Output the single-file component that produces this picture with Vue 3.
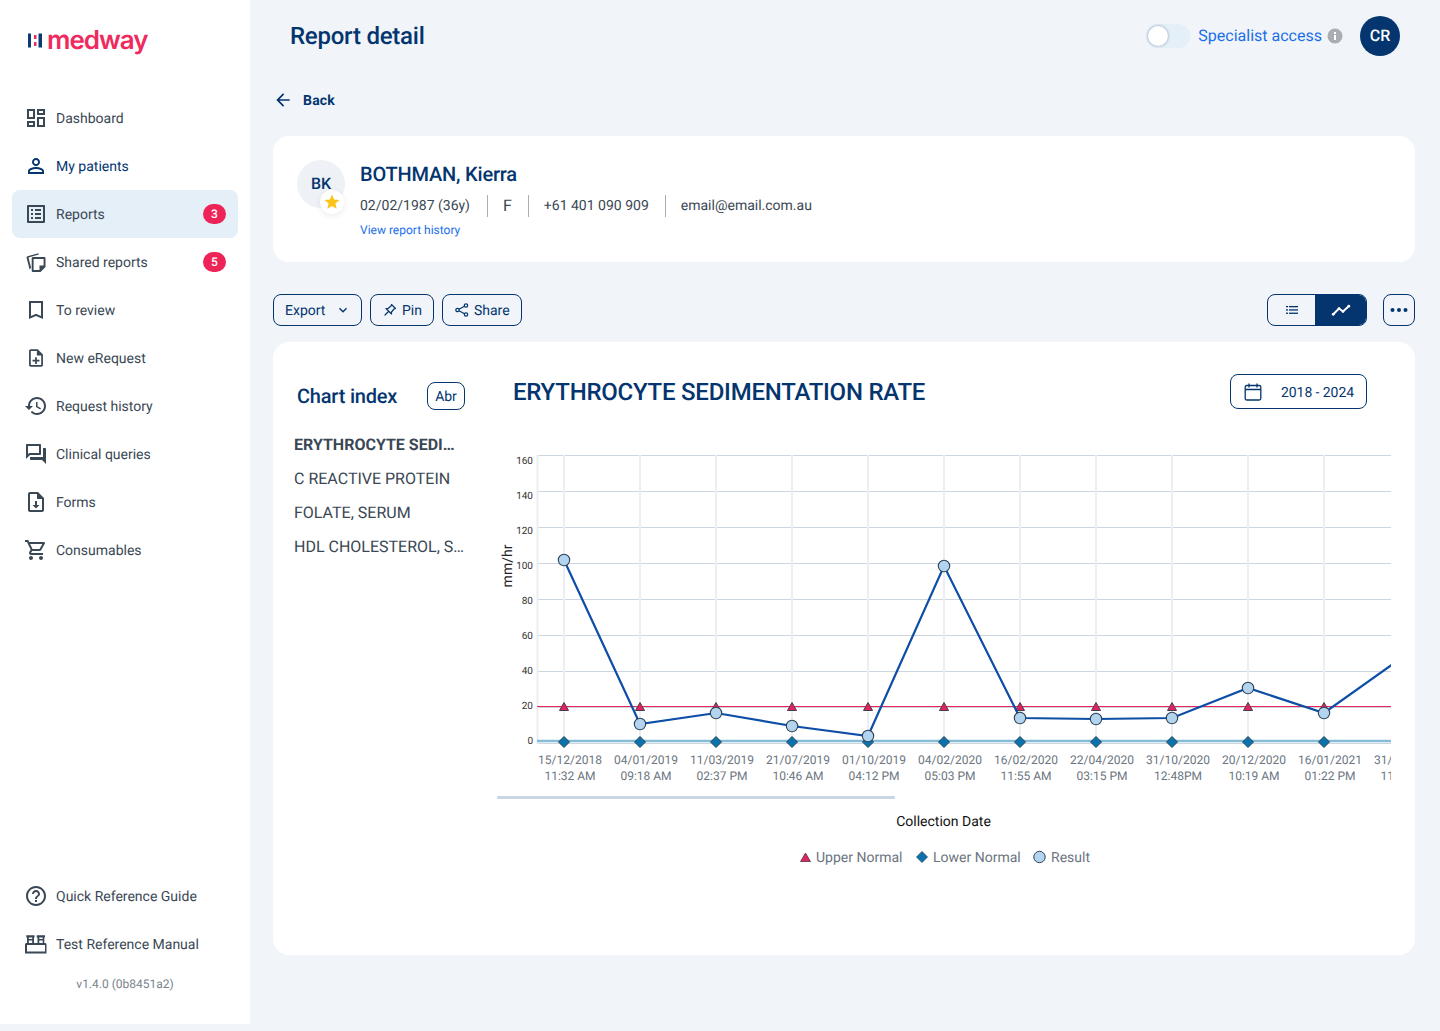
<script setup>
const navTop = [
  { label: 'Dashboard', d: 'M19 5v2h-4V5h4M9 5v6H5V5h4m10 8v6h-4v-6h4M9 17v2H5v-2h4M21 3h-8v6h8V3zM11 3H3v10h8V3zm10 8h-8v10h8V11zm-10 4H3v6h8v-6z' },
  { label: 'My patients', cls: 'navy', d: 'M12 5.9c1.16 0 2.1.94 2.1 2.1s-.94 2.1-2.1 2.1S9.9 9.16 9.9 8s.94-2.1 2.1-2.1m0 9c2.97 0 6.1 1.46 6.1 2.1v1.1H5.9V17c0-.64 3.13-2.1 6.1-2.1M12 4C9.79 4 8 5.79 8 8s1.79 4 4 4 4-1.79 4-4-1.79-4-4-4zm0 9c-2.67 0-8 1.34-8 4v3h16v-3c0-2.66-5.33-4-8-4z' },
  { label: 'Reports', cls: 'active', badge: 3, d: 'M19 5v14H5V5h14m1.1-2H3.9c-.5 0-.9.4-.9.9v16.2c0 .4.4.9.9.9h16.2c.4 0 .9-.5.9-.9V3.9c0-.5-.5-.9-.9-.9zM11 7h6v2h-6V7zm0 4h6v2h-6v-2zm0 4h6v2h-6zM7 7h2v2H7zm0 4h2v2H7zm0 4h2v2H7z' },
  { label: 'Shared reports', badge: 5, d: 'M9 7h11.2c.7 0 1.3.6 1.3 1.3V17l-5 5H9c-.7 0-1.3-.6-1.3-1.3V8.3C7.7 7.6 8.3 7 9 7zm.6 1.9v11.2h5.9v-4.6h4.1V8.900zM5.600 19.600l-3-11.800c-.2-.7.2-1.300.9-1.500l10.900-3.100.4 1.300-10.300 2.900 2.600 10.300z' },
  { label: 'To review', d: 'M19 3H5v18l7-3 7 3V3zm-2 15l-5-2.180L7 18V5h10v13z' },
  { label: 'New eRequest', icon: 'small', d: 'M13 11h-2v3H8v2h3v3h2v-3h3v-2h-3zm1-9H6c-1.100 0-2 .9-2 2v16c0 1.100.89 2 1.990 2H18c1.100 0 2-.9 2-2V8l-6-6zm4 18H6V4h7v5h5v11z' },
  { label: 'Request history', d: 'M13 3c-4.970 0-9 4.030-9 9H1l3.890 3.890.07.14L9 12H6c0-3.870 3.130-7 7-7s7 3.130 7 7-3.130 7-7 7c-1.930 0-3.680-.79-4.940-2.060l-1.420 1.420C8.270 19.990 10.510 21 13 21c4.970 0 9-4.030 9-9s-4.030-9-9-9zm-1 5v5l4.280 2.540.72-1.210-3.500-2.080V8H12z' },
  { label: 'Clinical queries', d: 'M15 4v7H5.170L4 12.170V4h11m1-2H3c-.55 0-1 .45-1 1v14l4-4h10c.55 0 1-.45 1-1V3c0-.55-.45-1-1-1zm5 4h-2v9H6v2c0 .55.45 1 1 1h11l4 4V7c0-.55-.45-1-1-1z' },
  { label: 'Forms', d: 'M14 2H6c-1.100 0-2 .9-2 2v16c0 1.100.89 2 1.990 2H18c1.100 0 2-.9 2-2V8l-6-6zm4 18H6V4h7v5h5v11zM13 11h-2v4H8.500l3.500 3.500 3.500-3.500H13z' },
  { label: 'Consumables', d: 'M15.550 13c.75 0 1.410-.41 1.750-1.030l3.580-6.490c.37-.66-.11-1.480-.87-1.480H5.210l-.94-2H1v2h2l3.600 7.590-1.350 2.440C4.520 15.370 5.480 17 7 17h12v-2H7l1.100-2h7.450zM6.160 6h12.150l-2.760 5H8.530L6.160 6zM7 18c-1.100 0-1.990.9-1.990 2S5.900 22 7 22s2-.9 2-2-.9-2-2-2zm10 0c-1.100 0-1.990.9-1.990 2s.89 2 1.990 2 2-.9 2-2-.9-2-2-2z' },
]
const navBottom = [
  { label: 'Quick Reference Guide', d: 'M11 18h2v-2h-2v2zm1-16C6.480 2 2 6.480 2 12s4.480 10 10 10 10-4.480 10-10S17.520 2 12 2zm0 18c-4.410 0-8-3.590-8-8s3.590-8 8-8 8 3.590 8 8-3.590 8-8 8zm0-14c-2.210 0-4 1.790-4 4h2c0-1.100.9-2 2-2s2 .9 2 2c0 2-3 1.750-3 5h2c0-2.250 3-2.500 3-5 0-2.210-1.790-4-4-4z' },
  { label: 'Test Reference Manual', d: 'M1 12.500c0-.8.7-1.500 1.500-1.500H3V5.500H2.300V3.200h8.200v2.300H10V11h3.500V5.500h-.8V3.200h8.300v2.300h-.7V11h.7c.8 0 1.500.7 1.500 1.500V21.500H1zM4.800 5.500V7h3.400V5.500zm0 3V11h3.400V8.500zm10.500-3V7h3.400V5.500zm0 3V11h3.400V8.500zM3 13v6.500h18V13z' },
]

const index = ['ERYTHROCYTE SEDIMENTATION RATE', 'C REACTIVE PROTEIN', 'FOLATE, SERUM', 'HDL CHOLESTEROL, SERUM']

const originY = 445
const xs = Array.from({ length: 12 }, (_, i) => 67 + 76 * i)
const yLabels = [160, 140, 120, 100, 80, 60, 40, 20, 0]
const yAxis = yLabels.map((label, i) => ({
  label,
  grid: 455.5 + 36 * i - originY,
  text: 464 + 35 * i - originY,
}))
const dates = [
  ['15/12/2018', '11:32 AM'], ['04/01/2019', '09:18 AM'], ['11/03/2019', '02:37 PM'], ['21/07/2019', '10:46 AM'],
  ['01/10/2019', '04:12 PM'], ['04/02/2020', '05:03 PM'], ['16/02/2020', '11:55 AM'], ['22/04/2020', '03:15 PM'],
  ['31/10/2020', '12:48PM'], ['20/12/2020', '10:19 AM'], ['16/01/2021', '01:22 PM'], ['31/03/2021', '11:05 AM'],
]
const resultY = [560, 724, 713, 726, 736, 566, 718, 719, 718, 688, 713, 659].map((y) => y - originY)
const points = xs.map((x, i) => ({ x, y: resultY[i] }))
const linePoints = points.map((p) => `${p.x},${p.y}`).join(' ')
const upperY = 261.500
const lowerY = 296
const tri = (x, y) => `${x},${y - 4} ${x + 4.500},${y + 4} ${x - 4.500},${y + 4}`
const dia = (x, y) => `${x},${y - 5.500} ${x + 5.500},${y} ${x},${y + 5.500} ${x - 5.500},${y}`
</script>

<template>
  <div class="page">
    <aside class="side">
      <div>
        <div class="logo">
          <svg width="15" height="15" viewBox="0 0 15 15" class="logo-mark">
            <rect x="0" y="0.500" width="3" height="14" fill="#0c3a73" />
            <rect x="6" y="2" width="2.500" height="4" fill="#ee2a5f" />
            <rect x="6" y="9" width="2.500" height="4" fill="#ee2a5f" />
            <rect x="10.500" y="0.500" width="3.500" height="14" fill="#0c3a73" />
          </svg>
          <span class="logo-text">medway</span>
        </div>
        <nav class="nav">
          <a v-for="item in navTop" :key="item.label" class="nav-item" :class="item.cls">
            <svg class="nav-icon" :class="item.icon" viewBox="0 0 24 24"><path :d="item.d" /></svg>
            <span class="nav-label">{{ item.label }}</span>
            <span v-if="item.badge" class="badge">{{ item.badge }}</span>
          </a>
        </nav>
      </div>
      <div class="side-foot">
        <a v-for="item in navBottom" :key="item.label" class="nav-item">
          <svg class="nav-icon" viewBox="0 0 24 24"><path :d="item.d" fill-rule="evenodd" /></svg>
          <span class="nav-label">{{ item.label }}</span>
        </a>
        <div class="version">v1.4.0 (0b8451a2)</div>
      </div>
    </aside>

    <main class="main">
      <header class="top">
        <h1 class="title">Report detail</h1>
        <div class="top-right">
          <span class="toggle"><span class="thumb"></span></span>
          <span class="spec">Specialist access</span>
          <svg class="info" width="16" height="16" viewBox="0 0 16 16">
            <circle cx="8" cy="8" r="7.500" fill="#a8aeb4" />
            <rect x="7" y="7" width="2" height="5" fill="#fff" />
            <rect x="7" y="4" width="2" height="2" fill="#fff" />
          </svg>
          <span class="me">CR</span>
        </div>
      </header>

      <div class="back">
        <svg width="20" height="20" viewBox="0 0 24 24"><path d="M20 11H7.830l5.590-5.590L12 4l-8 8 8 8 1.410-1.410L7.830 13H20v-2z" fill="#04356f" /></svg>
        <span class="back-text">Back</span>
      </div>

      <section class="card patient">
        <div class="avatar">
          BK
          <span class="star">
            <svg width="18" height="18" viewBox="0 0 24 24"><path d="M12 17.270 18.180 21l-1.640-7.030L22 9.240l-7.190-.61L12 2 9.190 8.630 2 9.240l5.460 4.730L5.820 21z" fill="#fcc419" /></svg>
          </span>
        </div>
        <div class="pinfo">
          <div class="pname">BOTHMAN, Kierra</div>
          <div class="pmeta">
            <span class="dob">02/02/1987 (36y)</span>
            <span class="sex">F</span>
            <span class="phone">+61 401 090 909</span>
            <span class="mail">email@email.com.au</span>
          </div>
          <a class="plink">View report history</a>
        </div>
      </section>

      <div class="toolbar">
        <div class="tools">
          <button class="btn export">
            <span class="bt">Export</span>
            <svg width="16" height="16" viewBox="0 0 24 24"><path d="M7.410 8.590 12 13.170l4.590-4.580L18 10l-6 6-6-6z" fill="#04356f" /></svg>
          </button>
          <button class="btn">
            <svg width="16" height="16" viewBox="0 0 16 16" fill="none" stroke="#04356f" stroke-width="1.200" stroke-linejoin="round" stroke-linecap="round"><path d="M9.500 2.500 13.500 6.500 12 7 9.500 10 9.500 12 4 6.500 6 6.500 9 4zM6.500 9.500 3 13" /></svg>
            <span class="bt">Pin</span>
          </button>
          <button class="btn">
            <svg width="16" height="16" viewBox="0 0 16 16" fill="none" stroke="#04356f" stroke-width="1.200"><circle cx="12" cy="3.500" r="1.700" /><circle cx="3.500" cy="8" r="1.700" /><circle cx="12" cy="12.500" r="1.700" /><path d="M5 7.200 10.500 4.300M5 8.800l5.500 2.900" /></svg>
            <span class="bt">Share</span>
          </button>
        </div>
        <div class="tools views">
          <div class="seg">
            <span class="seg-item">
              <svg width="14" height="10" viewBox="0 0 14 10" fill="#04356f"><rect x="1" y="1" width="2" height="1.300" /><rect x="4" y="1" width="9" height="1.300" /><rect x="1" y="4.300" width="2" height="1.300" /><rect x="4" y="4.300" width="9" height="1.300" /><rect x="1" y="7.600" width="2" height="1.300" /><rect x="4" y="7.600" width="9" height="1.300" /></svg>
            </span>
            <span class="seg-item on">
              <svg width="20" height="20" viewBox="0 0 20 20" fill="#fff" stroke="none"><path d="M2 14.500 8 8.500 12 11.500 18 6" fill="none" stroke="#fff" stroke-width="2" /><circle cx="2.200" cy="14.300" r="1.400" /><circle cx="8" cy="8.500" r="1.300" /><circle cx="12" cy="11.500" r="1.300" /><circle cx="17.800" cy="6.200" r="1.400" /></svg>
            </span>
          </div>
          <button class="btn more">
            <svg width="18" height="6" viewBox="0 0 18 6" fill="#04356f"><circle cx="2.500" cy="3" r="2" /><circle cx="9" cy="3" r="2" /><circle cx="15.500" cy="3" r="2" /></svg>
          </button>
        </div>
      </div>

      <section class="card chart-card">
        <div class="index">
          <div class="index-head">
            <h2>Chart index</h2>
            <button class="btn abr"><span class="bt">Abr</span></button>
          </div>
          <ul class="index-list">
            <li v-for="(name, i) in index" :key="name" :class="{ current: i === 0 }">{{ name }}</li>
          </ul>
        </div>
        <div class="chart-area">
          <div class="chart-head">
            <h2>ERYTHROCYTE SEDIMENTATION RATE</h2>
            <button class="btn range">
              <svg width="20" height="20" viewBox="0 0 20 20" fill="none" stroke="#04356f" stroke-width="1.300"><rect x="2.200" y="3.500" width="15.600" height="14.500" rx="1.500" /><path d="M2.200 7.500h15.600M6 1.500v4M14 1.500v4" /></svg>
              <span class="bt tight">2018 - 2024</span>
            </button>
          </div>
          <svg class="chart" width="894" height="430" viewBox="0 0 894 430">
            <line v-for="t in yAxis" :key="'h' + t.label" x1="40" x2="894" :y1="t.grid" :y2="t.grid" stroke="#cdd6e0" stroke-width="1" />
            <line x1="40.500" x2="40.500" y1="10" y2="299" stroke="#eceef1" stroke-width="2" />
            <line v-for="x in xs" :key="'v' + x" :x1="x" :x2="x" y1="10" y2="298" stroke="#eceef1" stroke-width="2" />
            <text v-for="t in yAxis" :key="'yl' + t.label" x="36" :y="t.text" class="ytick" text-anchor="end">{{ t.label }}</text>
            <text class="yname" transform="translate(14.500 121) rotate(-90)" text-anchor="middle">mm/hr</text>

            <line x1="40" x2="894" :y1="upperY" :y2="upperY" stroke="#ee2458" stroke-width="1" />
            <polygon v-for="x in xs" :key="'t' + x" :points="tri(x, upperY)" fill="#e0245e" stroke="#4a3a50" stroke-width="1" />
            <line x1="40" x2="894" :y1="lowerY" :y2="lowerY" stroke="#85bdd8" stroke-width="2.400" />
            <polygon v-for="x in xs" :key="'d' + x" :points="dia(x, lowerY + 1)" fill="#0a73ad" stroke="#2f4358" stroke-width="1" />

            <polyline :points="linePoints" fill="none" stroke="#0d4ea6" stroke-width="2.200" />
            <circle v-for="p in points" :key="'c' + p.x" :cx="p.x" :cy="p.y" r="5.700" fill="#b3d4ee" stroke="#2f4358" stroke-width="1.100" />

            <g v-for="(d, i) in dates" :key="d[0]">
              <text :x="xs[i] + 6" y="319" class="xtick" text-anchor="middle">{{ d[0] }}</text>
              <text :x="xs[i] + 6" y="335" class="xtick" text-anchor="middle">{{ d[1] }}</text>
            </g>

            <rect x="0" y="351" width="398" height="3" rx="1" fill="#cbd6e4" />
            <text x="446.500" y="381" class="xname" text-anchor="middle">Collection Date</text>

            <polygon points="308.500,408 313.500,416.500 303.500,416.500" fill="#e0245e" stroke="#4a3a50" stroke-width="0.800" />
            <text x="319" y="417" class="legend">Upper Normal</text>
            <polygon :points="dia(425, 412)" fill="#0a73ad" stroke="#2f4358" stroke-width="0.800" />
            <text x="436" y="417" class="legend">Lower Normal</text>
            <circle cx="542.500" cy="412" r="5.700" fill="#b3d4ee" stroke="#2f4358" stroke-width="1" />
            <text x="554" y="417" class="legend">Result</text>
          </svg>
        </div>
      </section>
    </main>
  </div>
</template>

<style>
html, body { margin: 0; background: #f1f4f8; }
</style>

<style scoped>
* { box-sizing: border-box; }
.page {
  display: flex;
  align-items: flex-start;
  width: 1440px;
  height: 1031px;
  overflow: hidden;
  background: #f1f4f8;
  font-family: Roboto, "Liberation Sans", sans-serif;
  color: #3a4754;
  text-rendering: geometricPrecision;
}
.side {
  width: 250px;
  height: 1024px;
  flex: none;
  background: #fff;
  display: flex;
  flex-direction: column;
  justify-content: space-between;
  padding: 0 12px;
}
.logo {
  height: 94px;
  padding: 23px 0 0 16px;
  display: flex;
  align-items: flex-start;
  gap: 4px;
}
.logo-mark { margin-top: 10px; }
.logo-text {
  font-family: Inter, sans-serif;
  font-weight: 600;
  font-size: 26px;
  line-height: 36px;
  letter-spacing: -1px;
  color: #ee2a5f;
}
.nav-item {
  display: flex;
  align-items: center;
  height: 48px;
  padding: 0 12px;
  border-radius: 8px;
  font-size: 14px;
  color: #3a4754;
}
.nav-item.navy { color: #04356f; }
.nav-item.active { background: #e4eff8; }
.nav-icon { width: 24px; height: 24px; margin-right: 8px; fill: currentColor; flex: none; }
.nav-icon.small { transform: scale(0.87); }
.nav-label { flex: 1; white-space: nowrap; padding-top: 2px; }
.badge {
  width: 23px;
  height: 20px;
  border-radius: 10px;
  background: #ee2458;
  color: #fff;
  font-size: 12px;
  font-weight: 500;
  text-align: center;
  line-height: 20px;
}
.version {
  height: 32px;
  margin-bottom: 24px;
  text-align: center;
  font-size: 12px;
  line-height: 32px;
  color: #7a848e;
}
.main {
  width: 1190px;
  flex: none;
  padding: 0 25px 0 23px;
}
.top {
  height: 72px;
  display: flex;
  align-items: center;
  justify-content: space-between;
  padding: 0 15px 0 17px;
}
.title {
  margin: 0;
  font-size: 24px;
  font-weight: 500;
  letter-spacing: -0.01em;
  color: #04356f;
}
.top-right { display: flex; align-items: center; }
.toggle {
  width: 44px;
  height: 24px;
  border-radius: 12px;
  background: #e4eff8;
  padding: 2px;
  display: block;
}
.thumb {
  display: block;
  width: 20px;
  height: 20px;
  border-radius: 50%;
  background: #fff;
  box-shadow: 0 0 3px rgba(4, 53, 111, 0.45);
}
.spec { margin-left: 8px; font-size: 16px; line-height: 22px; margin-top: -1px; color: #1a6fe8; }
.info { margin-left: 5px; margin-right: 17px; }
.me {
  width: 40px;
  height: 40px;
  border-radius: 50%;
  background: #04356f;
  color: #fff;
  font-size: 16px;
  font-weight: 500;
  text-align: center;
  line-height: 40px;
}
.back {
  height: 24px;
  margin-top: 16px;
  display: flex;
  align-items: center;
  gap: 10px;
  font-size: 14px;
  font-weight: 700;
  letter-spacing: 0.2px;
  color: #04356f;
}
.back-text { padding-top: 2px; }
.card { background: #fff; border-radius: 16px; }
.patient {
  margin-top: 24px;
  height: 126px;
  padding: 24px;
  display: flex;
  gap: 15px;
}
.avatar {
  position: relative;
  width: 48px;
  height: 48px;
  border-radius: 50%;
  background: #eef2f6;
  color: #04356f;
  font-size: 16px;
  font-weight: 500;
  text-align: center;
  line-height: 46px;
  padding-top: 1px;
}
.star {
  position: absolute;
  right: 1px;
  bottom: -6px;
  width: 24px;
  height: 24px;
  border-radius: 50%;
  background: #fff;
  box-shadow: 0 2px 6px rgba(0, 0, 0, 0.08);
  display: flex;
  align-items: center;
  justify-content: center;
}
.pinfo { display: flex; flex-direction: column; align-items: flex-start; }
.pname { font-size: 20px; line-height: 28px; font-weight: 500; letter-spacing: -0.01em; color: #04356f; }
.pmeta { display: flex; align-items: center; margin-top: 7px; font-size: 14px; height: 22px; }
.pmeta span { line-height: 22px; border-left: 1px solid #a8aeb4; }
.pmeta .dob { padding: 0 17px 0 0; border-left: none; }
.pmeta .sex { font-size: 16px; padding: 0 16px 0 15px; }
.pmeta .phone { padding: 0 16px 0 15px; }
.pmeta .mail { padding: 0 16px 0 15px; }
.plink { margin-top: 5px; font-size: 12px; line-height: 16px; color: #1a6fe8; }
.toolbar {
  margin-top: 32px;
  display: flex;
  justify-content: space-between;
}
.tools { display: flex; gap: 8px; }
.views { gap: 16px; }
.btn {
  height: 32px;
  padding: 0 11px;
  display: inline-flex;
  align-items: center;
  gap: 4px;
  border: 1px solid #04356f;
  border-radius: 8px;
  background: transparent;
  color: #04356f;
  font-family: inherit;
  font-size: 14px;
  text-rendering: inherit;
}
.bt { padding-top: 2px; }
.tight { letter-spacing: -0.005em; }
.export { width: 89px; justify-content: space-between; padding-right: 10px; }
.seg {
  width: 100px;
  height: 32px;
  display: flex;
  border: 1px solid #04356f;
  border-radius: 8px;
  overflow: hidden;
}
.seg-item { width: 47px; flex: none; display: flex; align-items: center; justify-content: center; }
.seg-item.on { width: 51px; background: #04356f; }
.more { width: 32px; padding: 0; justify-content: center; }
.chart-card {
  margin-top: 16px;
  height: 613px;
  padding: 0 24px 0 21px;
  display: flex;
}
.index { width: 203px; flex: none; }
.index-head {
  display: flex;
  align-items: center;
  justify-content: space-between;
  width: 171px;
  height: 28px;
  margin-top: 40px;
  padding-left: 3px;
}
.index-head h2 { margin: 0; font-size: 20px; font-weight: 500; letter-spacing: -0.01em; color: #04356f; white-space: nowrap; }
.abr { width: 38px; height: 28px; padding: 0; justify-content: center; }
.index-list {
  list-style: none;
  margin: 18px 0 0;
  padding: 0;
  width: 171px;
}
.index-list li {
  height: 34px;
  line-height: 34px;
  font-size: 16px;
  white-space: nowrap;
  overflow: hidden;
  text-overflow: ellipsis;
}
.index-list li.current { font-weight: 700; }
.chart-area { width: 894px; flex: none; }
.chart-head {
  height: 103px;
  padding: 33px 24px 0 16px;
  display: flex;
  align-items: flex-start;
  justify-content: space-between;
}
.chart-head h2 { margin: 0; font-size: 24px; line-height: 34px; font-weight: 500; letter-spacing: -0.01em; color: #04356f; white-space: nowrap; }
.range { width: 137px; height: 35px; margin-top: -1px; padding: 0 12px; justify-content: space-between; }
.chart { display: block; }
.ytick { font-size: 10px; fill: #333; font-family: Roboto, sans-serif; }
.yname { font-size: 14px; fill: #222; font-family: Roboto, sans-serif; }
.xtick { font-size: 12px; fill: #6b7580; font-family: Roboto, sans-serif; }
.xname { font-size: 14px; fill: #111; font-family: Roboto, sans-serif; }
.legend { font-size: 14px; fill: #6b7580; font-family: Roboto, sans-serif; }
</style>
